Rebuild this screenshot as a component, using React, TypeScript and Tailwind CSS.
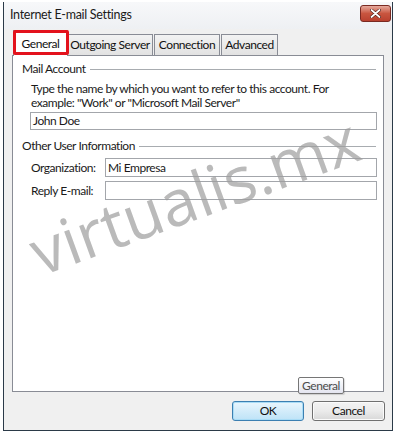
import React from "react";

const font = { fontFamily: 'Lato, "Noto Sans", Arial, sans-serif' };
const wmFont = { fontFamily: '"Open Sans", "Noto Sans", Arial, sans-serif' };

function Tab({ label, active, width }: { label: string; active?: boolean; width: string }) {
  if (active) {
    return (
      <div className={`relative z-10 -mb-px flex h-[26px] items-center justify-center border border-b-0 border-[#898c95] bg-white mr-[-1px] ${width}`}>
        <span className="text-[12px] leading-[14px] text-[#111]">{label}</span>
        {/* red highlight box from the screenshot */}
        <div className="pointer-events-none absolute left-[-1px] right-[-2px] top-[-1px] bottom-[1px] rounded-[2px] border-[3px] border-[#e3121c]" />
      </div>
    );
  }
  return (
    <div className={`flex h-[21px] items-center justify-center border border-b-0 border-[#898c95] bg-gradient-to-b from-[#f3f3f3] to-[#e2e2e2] mr-[1px] ${width}`}>
      <span className="text-[12px] leading-[14px] text-[#111]">{label}</span>
    </div>
  );
}

function GroupTitle({ title }: { title: string }) {
  return (
    <div className="flex items-center pl-[9px] pr-[7px]">
      <span className="text-[12px] leading-[14px] text-[#1a1a1a]">{title}</span>
      <div className="ml-[4px] h-px flex-1 bg-[#a8acb0]" />
    </div>
  );
}

export default function App() {
  return (
    <div className="relative h-[438px] w-[398px] overflow-hidden bg-white tracking-[-0.45px]" style={font}>
      <div className="ml-[3px] mt-[2px] flex h-[429px] w-[390px] flex-col border-x border-b border-[#2b3a48] bg-[#f0f0f0]">
        {/* title bar */}
        <div className="flex h-[27px] items-start bg-gradient-to-b from-[#f7f8fa] to-[#eef0f3] pl-[6px] pr-[1px]">
          <span className="mt-[5px] text-[12.5px] leading-[15px] tracking-[-0.3px] text-[#1b1b1b]">Internet E-mail Settings</span>
          <div className="ml-auto mt-[3px] flex h-[17px] w-[31px] items-center justify-center rounded-[3px] border border-[#7a2a22] bg-gradient-to-b from-[#e5a99d] via-[#c8553f] to-[#b9412f]">
            <svg width="11" height="9" viewBox="0 0 11 9">
              <path d="M1.5 1 L9.5 8 M9.5 1 L1.5 8" stroke="#4a1a14" strokeWidth="3" strokeLinecap="round" />
              <path d="M1.5 1 L9.5 8 M9.5 1 L1.5 8" stroke="#ffffff" strokeWidth="1.8" strokeLinecap="round" />
            </svg>
          </div>
        </div>

        {/* tabs */}
        <div className="ml-[9px] flex h-[26px] items-end">
          <Tab label="General" active width="w-[55px]" />
          <Tab label="Outgoing Server" width="w-[86px]" />
          <Tab label="Connection" width="w-[66px]" />
          <Tab label="Advanced" width="w-[57px]" />
        </div>

        {/* tab panel */}
        <div className="ml-[8px] h-[337px] w-[372px] border border-[#898c95] bg-white pt-[6px]">
          <GroupTitle title="Mail Account" />
          <p className="ml-[18px] mt-[6px] text-[12px] leading-[14px] text-[#1a1a1a]">
            Type the name by which you want to refer to this account. For
            <br />
            example: "Work" or "Microsoft Mail Server"
          </p>
          <div className="ml-[17px] mt-[2px] flex h-[18px] w-[347px] items-center border border-[#a3a6ab] px-[2px] text-[12px] text-[#1a1a1a]">
            John Doe
          </div>

          <div className="mt-[9px]">
            <GroupTitle title="Other User Information" />
          </div>
          <div className="mt-[5px] flex items-center pl-[18px]">
            <span className="w-[74px] text-[12px] leading-[14px] text-[#1a1a1a]">Organization:</span>
            <div className="flex h-[19px] w-[272px] items-center border border-[#a3a6ab] px-[2px] text-[12px] text-[#1a1a1a]">
              Mi Empresa
            </div>
          </div>
          <div className="mt-[4px] flex items-center pl-[18px]">
            <span className="w-[74px] text-[12px] leading-[14px] text-[#1a1a1a]">Reply E-mail:</span>
            <div className="h-[19px] w-[272px] border border-[#a3a6ab]" />
          </div>
        </div>

        {/* buttons */}
        <div className="relative mt-[9px] flex justify-end gap-[8px] pr-[7px]">
          <div className="flex h-[20px] w-[72px] items-center justify-center rounded-[3px] border border-[#3c7fb1] bg-gradient-to-b from-[#eaf6fd] via-[#d3ecfa] to-[#bee3f7] text-[12px] text-[#111] shadow-[inset_0_0_0_1px_#a9dcf6]">
            OK
          </div>
          <div className="flex h-[20px] w-[73px] items-center justify-center rounded-[3px] border border-[#707070] bg-gradient-to-b from-[#f3f3f3] via-[#ebebeb] to-[#d8d8d8] text-[12px] text-[#111] shadow-[inset_0_0_0_1px_#fbfbfb]">
            Cancel
          </div>
          {/* tooltip */}
          <div className="absolute left-[294px] top-[-24px] flex h-[17px] items-center rounded-[2px] border border-[#767676] bg-gradient-to-b from-[#ffffff] to-[#e4e5f0] px-[3px] text-[12px] leading-[14px] text-[#4c4c4c] shadow-[1px_1px_1px_rgba(0,0,0,0.15)]">
            General
          </div>
        </div>
      </div>

      {/* watermark */}
      <div
        className="pointer-events-none absolute left-[22px] top-[163px] origin-center -rotate-[20deg] whitespace-nowrap text-[64px] leading-[64px] tracking-normal text-[#9c9c9c]/70"
        style={wmFont}
      >
        virtualis.mx
      </div>
    </div>
  );
}
